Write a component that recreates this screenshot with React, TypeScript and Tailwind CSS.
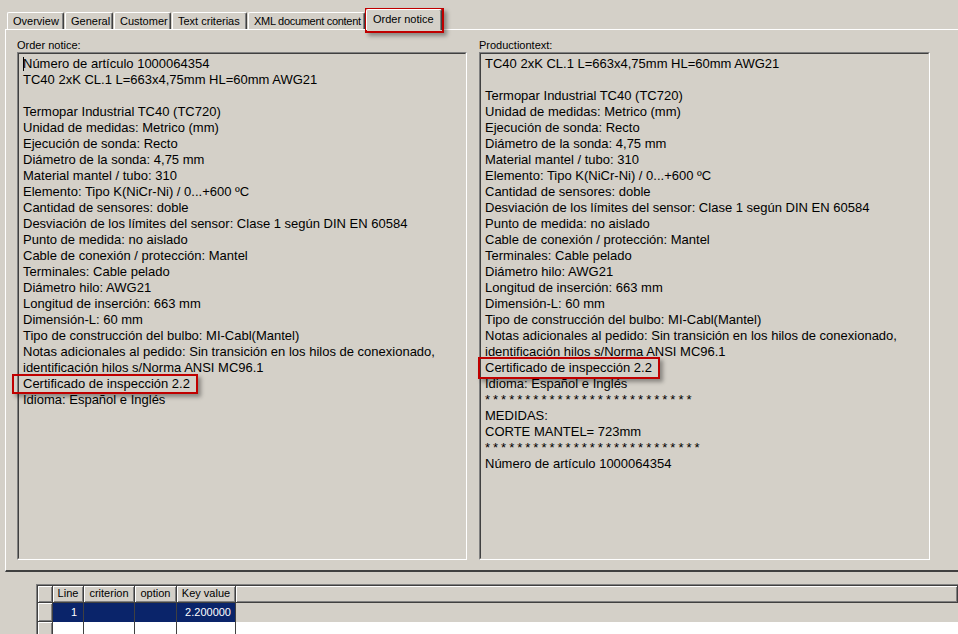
import React from 'react';

const TABS = [
  { label: 'Overview', w: 'w-[57px]' },
  { label: 'General', w: 'w-[48px]' },
  { label: 'Customer', w: 'w-[57px]' },
  { label: 'Text criterias', w: 'w-[75px]' },
  { label: 'XML document content', w: 'w-[117px] tracking-[-0.3px]' },
];

const COMMON = [
  'TC40 2xK CL.1 L=663x4,75mm HL=60mm AWG21',
  '',
  'Termopar Industrial TC40 (TC720)',
  'Unidad de medidas: Metrico (mm)',
  'Ejecución de sonda: Recto',
  'Diámetro de la sonda: 4,75 mm',
  'Material mantel / tubo: 310',
  'Elemento: Tipo K(NiCr-Ni) / 0...+600 ºC',
  'Cantidad de sensores: doble',
  'Desviación de los límites del sensor: Clase 1 según DIN EN 60584',
  'Punto de medida: no aislado',
  'Cable de conexión / protección: Mantel',
  'Terminales: Cable pelado',
  'Diámetro hilo: AWG21',
  'Longitud de inserción: 663 mm',
  'Dimensión-L: 60 mm',
  'Tipo de construcción del bulbo: MI-Cabl(Mantel)',
  'Notas adicionales al pedido: Sin transición en los hilos de conexionado,',
  'identificación hilos s/Norma ANSI MC96.1',
  'Certificado de inspección 2.2',
  'Idioma: Español e Inglés',
];

const LEFT_LINES = ['Número de artículo 1000064354', ...COMMON];

const RIGHT_LINES = [
  ...COMMON,
  '**************************',
  'MEDIDAS:',
  'CORTE MANTEL= 723mm',
  '***************************',
  'Número de artículo 1000064354',
];

// sunken read-only memo box
const MemoBox = ({ lines, caret }: { lines: string[]; caret?: boolean }) => (
  <div className="h-[508px] border-t border-l border-[#808080] border-b border-r border-b-white border-r-white">
    <div className="h-full border-t border-l border-[#404040] border-b border-r border-b-[#d4d0c8] border-r-[#d4d0c8] pl-[4px] pt-[2px] text-[13px] text-black overflow-hidden">
      {lines.map((l, i) => (
        <div
          key={i}
          className={`h-[16px] leading-[16px] whitespace-pre relative ${l.startsWith('*') ? 'tracking-[3px]' : ''}`}
        >
          {caret && i === 0 && <span className="absolute left-0 top-[1px] w-px h-[14px] bg-black" />}
          {l === '' ? '\u00a0' : l}
        </div>
      ))}
    </div>
  </div>
);

const HighlightBox = ({ className }: { className: string }) => (
  <div
    className={`absolute border-2 border-[#c00000] shadow-[3px_3px_4px_rgba(0,0,0,0.35)] pointer-events-none ${className}`}
  />
);

const btn =
  'bg-[#d4d0c8] border-r border-b border-[#404040] shadow-[inset_1px_1px_0_#ffffff,inset_-1px_-1px_0_#808080]';

export default function App() {
  return (
    <div className="relative w-[958px] h-[634px] overflow-hidden bg-[#d4d0c8] font-['Liberation_Sans',Arial,sans-serif] text-black">
      {/* Tab strip */}
      <div className="h-[29px] flex items-end pl-[7px] gap-[1px] text-[11px]">
        {TABS.map((t) => (
          <div
            key={t.label}
            className={`${t.w} h-[17px] border-t border-l border-white border-r border-r-[#404040] shadow-[inset_-1px_0_0_#808080] rounded-tl-[2px] rounded-tr-[2px] pl-[5px] leading-[16px] whitespace-nowrap overflow-hidden`}
          >
            {t.label}
          </div>
        ))}
        <div className="relative z-10 -mb-px w-[76px] h-[21px] bg-[#d4d0c8] border-t border-l border-white border-r border-r-[#404040] shadow-[inset_-1px_0_0_#808080] rounded-tl-[2px] rounded-tr-[2px] pl-[6px] pt-[1px] leading-[16px] whitespace-nowrap">
          Order notice
        </div>
      </div>

      {/* Tab panel */}
      <div className="ml-[5px] h-[543px] border-t border-l border-white border-b-2 border-b-[#404040] flex gap-[12px] pl-[11px] pt-[9px]">
        <div className="w-[450px] shrink-0">
          <div className="h-[13px] leading-[13px] text-[11px]">Order notice:</div>
          <MemoBox lines={LEFT_LINES} caret />
        </div>
        <div className="w-[451px] shrink-0">
          <div className="h-[13px] leading-[13px] text-[11px]">Productiontext:</div>
          <MemoBox lines={RIGHT_LINES} />
        </div>
      </div>

      {/* Grid */}
      <div className="mt-[12px] ml-[36px] border-t border-l border-[#808080]">
        <div className="border-t border-l border-[#404040] bg-white text-[11px]">
          <div className="flex h-[17px] leading-[15px]">
            <div className={`w-[15px] ${btn}`} />
            <div className={`w-[31px] text-center ${btn}`}>Line</div>
            <div className={`w-[51px] text-center ${btn}`}>criterion</div>
            <div className={`w-[42px] text-center ${btn}`}>option</div>
            <div className={`w-[59px] text-center ${btn}`}>Key value</div>
            <div className={`flex-1 ${btn}`} />
          </div>
          <div className="flex h-[19px] leading-[18px]">
            <div className={`w-[15px] ${btn}`} />
            <div className="w-[31px] bg-[#0a246a] text-white text-right pr-[6px] border-r border-[#404040]">1</div>
            <div className="w-[51px] bg-[#0a246a] border-r border-[#404040]" />
            <div className="w-[42px] bg-[#0a246a] border-r border-[#404040]" />
            <div className="w-[59px] bg-[#0a246a] text-white text-right pr-[4px] border-r border-[#404040]">2.200000</div>
            <div className="flex-1 bg-[#d4d0c8]" />
          </div>
          <div className="flex h-[19px]">
            <div className={`w-[15px] ${btn}`} />
            <div className="w-[31px] border-r border-[#404040]" />
            <div className="w-[51px] border-r border-[#404040]" />
            <div className="w-[42px] border-r border-[#404040]" />
            <div className="w-[59px] border-r border-[#404040]" />
            <div className="flex-1" />
          </div>
        </div>
      </div>

      <HighlightBox className="left-[365px] top-[8px] w-[79px] h-[25px]" />
      <HighlightBox className="left-[12px] top-[374px] w-[186px] h-[20px]" />
      <HighlightBox className="left-[478px] top-[357px] w-[182px] h-[22px]" />
    </div>
  );
}
